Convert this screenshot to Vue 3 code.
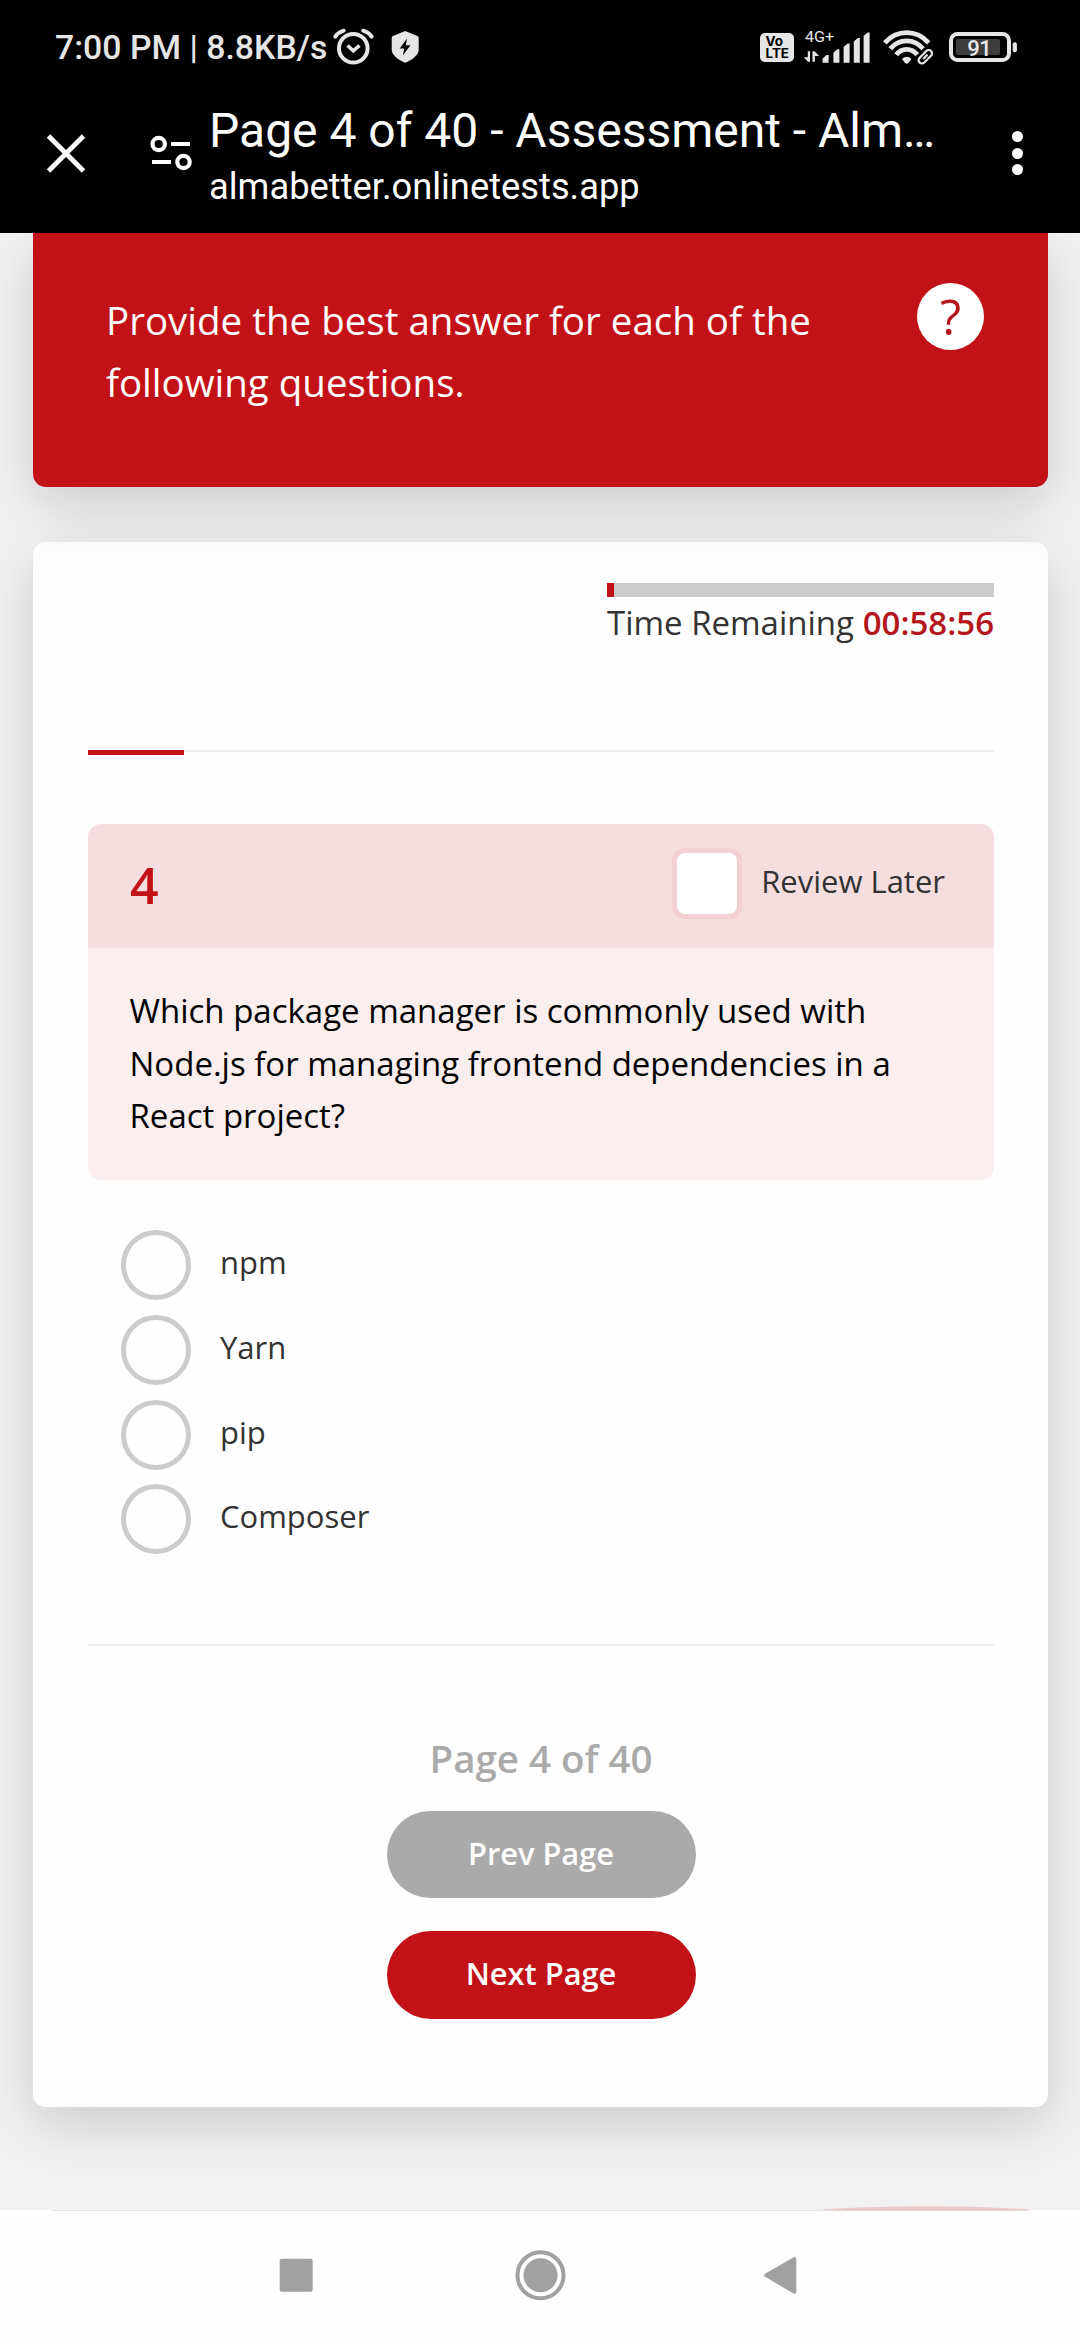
<script setup>
const options = ['npm', 'Yarn', 'pip', 'Composer']
const question = {
  number: 4,
  lines: [
    'Which package manager is commonly used with',
    'Node.js for managing frontend dependencies in a',
    'React project?',
  ],
}
const signalBars = [
  { x: 822.6, top: 55 },
  { x: 833.4, top: 49.3 },
  { x: 843.6, top: 43.5 },
  { x: 853.8, top: 38 },
  { x: 863.6, top: 32.5 },
]
</script>

<template>
  <div class="screen">
    <header class="chrome">
      <div class="status">
        <span class="clock">7:00 PM | 8.8KB/s</span>
        <svg class="status-left" width="94" height="60" viewBox="330 18 94 60">
          <g fill="none" stroke="#e6e6e6" stroke-width="4">
            <circle cx="353.3" cy="48.3" r="14.3" />
            <path d="M335.3 36.6Q338 32.5 343.7 30.7M371.6 36.6Q369 32.5 363.2 30.7" stroke-linecap="round" />
            <path d="M347.5 45.5L353.3 50.8L359.5 45.5" stroke-width="3.6" />
          </g>
          <path d="M405.2 31L417.5 36Q418.7 36.6 418.7 38V50C418.7 55.5 411 60.5 405.2 62.8C399.4 60.5 391.7 55.5 391.7 50V38Q391.7 36.6 392.9 36Z" fill="#e6e6e6" />
          <path d="M407 38.5L399.8 48.5H404.3L402.8 55.5L410.5 45.3H405.8Z" fill="#000" />
        </svg>
        <svg class="status-right" width="264" height="60" viewBox="756 18 264 60">
          <rect x="760" y="33" width="34" height="29" rx="5" fill="#e6e6e6" />
          <text class="volte" x="765.6" y="46" textLength="17.5" lengthAdjust="spacingAndGlyphs">Vo</text>
          <text class="volte" x="765.6" y="58.3" textLength="23.4" lengthAdjust="spacingAndGlyphs">LTE</text>
          <text class="net" x="805" y="41.7" textLength="29" lengthAdjust="spacingAndGlyphs">4G+</text>
          <g fill="#e6e6e6">
            <path d="M807.8 51.3H810V61.8H808L803.8 57.2H807.8ZM812.5 61.8V51.3H814.5L819 56H814.9V61.8Z" />
            <path
              v-for="bar in signalBars"
              :key="bar.x"
              :d="`M${bar.x} ${bar.top + 3.5}L${bar.x + 4} ${bar.top}H${bar.x + 6}V62.7H${bar.x}Z`"
            />
            <path d="M902 59Q906.7 54.5 911.4 59L908.5 62.7Q906.7 64.8 904.9 62.7Z" />
          </g>
          <g fill="none" stroke="#e6e6e6" stroke-width="4.8">
            <path d="M884.8 42.8Q894 32.7 906.7 32.7T928.6 42.8" />
            <path d="M890.3 48.7Q897 40.8 906.7 40.8T923.1 48.7" />
            <path d="M896.2 54.8Q900.4 49.3 906.7 49.3T917.2 54.8" />
          </g>
          <g fill="none" stroke-linecap="round" transform="rotate(-45 925.3 56.8)">
            <path d="M924 53.5H921a3.3 3.3 0 0 0 0 6.6H924M926.6 53.5H929.6a3.3 3.3 0 0 1 0 6.6H926.6M923 56.8H927.6" stroke="#000" stroke-width="5" />
            <path d="M924.5 53.5H920.5a3.3 3.3 0 0 0 0 6.6H924.5M926.1 53.5H930.1a3.3 3.3 0 0 1 0 6.6H926.1M923 56.8H927.6" stroke="#e6e6e6" stroke-width="2.2" />
          </g>
          <rect x="951" y="34" width="58" height="26" rx="6.5" fill="none" stroke="#e6e6e6" stroke-width="4" />
          <rect x="956" y="39" width="44" height="16" rx="2" fill="#3d3d3d" />
          <rect x="1012.7" y="42.3" width="4.2" height="10" rx="2" fill="#e6e6e6" />
          <text class="charge" x="967.2" y="55.7" textLength="24.5">91</text>
        </svg>
      </div>
      <div class="toolbar">
        <svg class="nav-icons" width="160" height="80" viewBox="40 113 160 80">
          <path d="M48.5 136L83.5 171M83.5 136L48.5 171" stroke="#fff" stroke-width="4.8" />
          <g fill="none" stroke="#fff" stroke-width="4.2">
            <circle cx="158.7" cy="144" r="6.2" />
            <path d="M171 144H190M152 162H171" />
            <circle cx="183.5" cy="162" r="6.2" />
          </g>
        </svg>
        <div class="titles">
          <div class="title">Page 4 of 40 - Assessment - Alm…</div>
          <div class="url">almabetter.onlinetests.app</div>
        </div>
        <div class="menu"><i></i><i></i><i></i></div>
      </div>
    </header>

    <main class="page">
      <section class="banner">
        <p>Provide the best answer for each of the<br />following questions.</p>
        <span class="help">?</span>
      </section>

      <section class="card">
        <div class="timer">
          <div class="track"><div class="elapsed"></div></div>
          <div class="remaining"><span>Time Remaining</span> <b>00:58:56</b></div>
        </div>
        <div class="rule progress"><div class="done"></div></div>

        <div class="question">
          <div class="q-head">
            <span class="q-num">{{ question.number }}</span>
            <span class="check"></span>
            <span class="review">Review Later</span>
          </div>
          <div class="q-body">
            <div v-for="line in question.lines" :key="line">{{ line }}</div>
          </div>
        </div>

        <div class="options">
          <div v-for="option in options" :key="option" class="option">
            <span class="radio"></span>
            <span>{{ option }}</span>
          </div>
        </div>
        <div class="rule"></div>

        <div class="pager">
          <div class="count">Page 4 of 40</div>
          <button class="prev">Prev Page</button>
          <button class="next">Next Page</button>
        </div>
      </section>
      <div class="bubble-clip">
        <svg width="206" height="4" viewBox="0 0 206 4"><path d="M0 3.3Q50 0.2 103 0.2T206 3.3V4H0Z" fill="#e7c8c9" /></svg>
      </div>
    </main>

    <nav class="system">
      <div class="edge"></div>
      <svg width="1080" height="129" viewBox="0 2211 1080 129" fill="#a1a1a1">
        <rect x="279.7" y="2258.7" width="33" height="33" rx="2" />
        <circle cx="540.5" cy="2275.3" r="23" fill="none" stroke="#a1a1a1" stroke-width="4" />
        <circle cx="540.5" cy="2275.3" r="17" />
        <path d="M766 2275.3L794.5 2258.8V2292Z" stroke="#a1a1a1" stroke-width="3.6" stroke-linejoin="round" />
      </svg>
    </nav>
  </div>
</template>

<style>
body {
  margin: 0;
}
</style>

<style scoped>
.screen {
  width: 1080px;
  height: 2340px;
  display: flex;
  flex-direction: column;
  overflow: hidden;
  background: #f2f2f2;
  font-family: 'Open Sans', sans-serif;
  color: #333;
}
.chrome {
  position: relative;
  z-index: 1;
  height: 233px;
  flex: none;
  background: #000;
  font-family: Roboto, sans-serif;
}
.status {
  display: flex;
  align-items: center;
  height: 96px;
  padding: 0 60px 0 55px;
  color: #e6e6e6;
}
.clock {
  width: 275px;
  font-size: 33.8px;
  font-weight: 500;
  line-height: 40px;
  white-space: nowrap;
}
.status-right {
  margin-left: auto;
}
.volte {
  font: 700 13px Inter, sans-serif;
  fill: #000;
}
.net {
  font: 400 14.5px Roboto, sans-serif;
  fill: #e6e6e6;
}
.charge {
  font: 500 22px Roboto, sans-serif;
  fill: #e6e6e6;
}
.toolbar {
  display: flex;
  align-items: center;
  height: 114px;
  padding: 0 57px 0 40px;
  color: #fff;
}
.nav-icons {
  margin-right: 9px;
}
.titles {
  padding-top: 9px;
  white-space: nowrap;
}
.title {
  font-size: 48px;
  line-height: 58px;
}
.url {
  font-size: 36.3px;
  line-height: 54px;
}
.menu {
  display: flex;
  flex-direction: column;
  gap: 5.5px;
  margin-left: auto;
}
.menu i {
  width: 11px;
  height: 11px;
  border-radius: 50%;
  background: #fff;
}
.page {
  height: 1977px;
  flex: none;
  box-sizing: border-box;
  padding: 0 32px 0 33px;
}
.banner,
.card {
  box-sizing: border-box;
  box-shadow: 0 18px 55px rgba(0, 0, 0, 0.16);
}
.banner {
  display: flex;
  justify-content: space-between;
  height: 254px;
  padding: 57px 64px 0 73px;
  border-radius: 0 0 13px 13px;
  background: #c31217;
  color: #fff;
}
.banner p {
  margin: 0;
  font-size: 38.5px;
  line-height: 61.6px;
  white-space: nowrap;
}
.help {
  width: 67px;
  height: 67px;
  margin-top: -7px;
  border-radius: 50%;
  background: #fff;
  color: #b5161b;
  font-size: 49px;
  line-height: 66px;
  text-align: center;
}
.card {
  height: 1565px;
  margin-top: 55px;
  padding: 41px 54px 0 55px;
  border-radius: 13px;
  background: linear-gradient(#fcfcfc, #fefefe 40px);
}
.timer {
  width: 387px;
  margin-left: auto;
}
.track {
  height: 14px;
  background: #ccc;
}
.elapsed {
  width: 7px;
  height: 14px;
  background: #c31217;
}
.remaining {
  display: flex;
  justify-content: space-between;
  margin-top: 4px;
  font-size: 33px;
  line-height: 44px;
  white-space: nowrap;
}
.remaining b {
  font-weight: 600;
  color: #b5161b;
}
.rule {
  height: 2px;
  background: #eee;
}
.progress {
  margin: 105px 0 72px;
}
.done {
  width: 96px;
  height: 5px;
  background: #c31217;
}
.question {
  overflow: hidden;
  border-radius: 13px;
}
.q-head {
  display: flex;
  align-items: center;
  height: 124px;
  box-sizing: border-box;
  padding: 0 49px 5px 42px;
  background: #f6dee0;
}
.q-num {
  flex: 1;
  padding-top: 2px;
  font-size: 50px;
  font-weight: 600;
  line-height: 60px;
  color: #c31217;
}
.check {
  width: 60px;
  height: 61px;
  border: 5px solid #f3d0d3;
  border-radius: 13px;
  background: #fff;
}
.review {
  margin: 0 0 6px 19px;
  font-size: 31px;
  line-height: 44px;
}
.q-body {
  height: 232px;
  box-sizing: border-box;
  padding: 37px 0 0 41.5px;
  background: #faeeee;
  color: #000;
  font-size: 33px;
  line-height: 52.5px;
  white-space: nowrap;
}
.options {
  padding: 50px 0 75px 33px;
}
.option {
  display: flex;
  gap: 29px;
  height: 84.75px;
  font-size: 31px;
  line-height: 65px;
}
.radio {
  width: 60px;
  height: 60px;
  border: 5px solid #ccc;
  border-radius: 50%;
}
.pager {
  display: flex;
  flex-direction: column;
  align-items: center;
  padding-top: 82px;
}
.count {
  margin-bottom: 23px;
  font-size: 38.5px;
  font-weight: 600;
  line-height: 60px;
  color: #aaa;
}
.pager button {
  width: 309px;
  height: 87px;
  padding: 0 0 4px;
  border: 0;
  border-radius: 44px;
  font: 600 30.8px 'Open Sans', sans-serif;
  color: #fff;
}
.prev {
  background: #aaa;
}
.pager .next {
  height: 88px;
  margin-top: 33px;
  background: #c31217;
}
.bubble-clip {
  display: flex;
  justify-content: flex-end;
  padding: 99px 19px 0 0;
}
.system {
  position: relative;
  flex: none;
  height: 130px;
  background: #fefefe;
}
.edge {
  width: 976px;
  height: 1px;
  margin-left: 52px;
  background: linear-gradient(90deg, #e4e4e4 772px, #e9cfd0 800px, #e9cfd0 950px, #e4e4e4);
}
.system svg {
  display: block;
}
</style>
